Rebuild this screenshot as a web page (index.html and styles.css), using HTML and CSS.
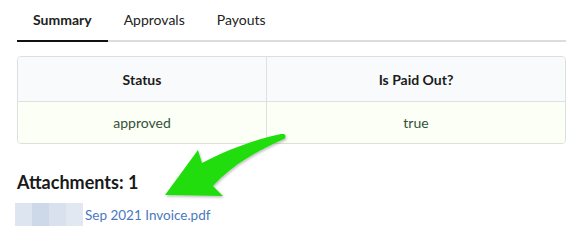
FILE: index.html
```html
<!DOCTYPE html>
<html lang="en">
<head>
<meta charset="utf-8">
<title>Summary</title>
<link rel="stylesheet" href="styles.css">
</head>
<body>
<div class="page">
  <div class="tabs">
    <span class="tab on">Summary</span>
    <span class="tab">Approvals</span>
    <span class="tab">Payouts</span>
  </div>

  <table class="info">
    <thead>
      <tr><th class="c1">Status</th><th>Is Paid Out?</th></tr>
    </thead>
    <tbody>
      <tr><td>approved</td><td>true</td></tr>
    </tbody>
  </table>

  <h3 class="att">Attachments: 1</h3>
  <div class="file">
    <span class="blur"><i></i><i></i><i></i><i></i></span>
    <a href="#">Sep 2021 Invoice.pdf</a>
  </div>

  <!-- annotation arrow drawn over the page -->
  <svg class="arrow" viewBox="0 0 140 75" width="140" height="75">
    <defs>
      <filter id="sh" x="-10%" y="-10%" width="130%" height="130%">
        <feDropShadow dx="1" dy="1.5" stdDeviation="1" flood-color="#000" flood-opacity=".25"/>
      </filter>
    </defs>
    <path filter="url(#sh)" fill="#22dd11"
      d="M129 9 C131 10 131 13 129 14 C104 25 78 39 58 61 L68 71 L10 70 L43 25 L47 38 C70 26 100 14 126 9 Z"/>
  </svg>
</div>
</body>
</html>
```

FILE: styles.css
```css
*{box-sizing:border-box;}
html,body{margin:0;background:#fff;}
body{ font-family:Lato,'Open Sans','Liberation Sans',sans-serif; color:#222; -webkit-font-smoothing:antialiased; }
.page{ position:relative; padding:0 20px 0 17px; }

/* tabs */
.tabs{ display:flex; border-bottom:2px solid #dcdcdc; height:42px; align-items:stretch; }
.tab{ display:flex; align-items:center; padding:0 16px 2px; font-size:14px; color:#222; margin-bottom:-2px; border-bottom:2px solid transparent; }
.tab.on{ font-weight:700; border-bottom-color:#111; }

/* table */
.info{ width:549px; margin-top:14px; border-collapse:separate; border-spacing:0; border:1px solid #dedede; border-radius:4px; overflow:hidden; font-size:14px; }
.info th,.info td{ text-align:center; }
.info th{ height:45px; background:#f9fafb; font-weight:700; color:#1c1c1c; border-bottom:1px solid #e0e0e0; }
.info td{ height:41px; background:#fcfff5; color:#34513a; }
.info .c1{ width:249px; }
.info th:first-child,.info td:first-child{ border-right:1px solid #e0e0e0; }

.att{ margin:26px 0 0; font-size:18px; font-weight:700; color:#1a1a1a; line-height:24px; }

.file{ display:flex; align-items:center; margin-top:9px; margin-left:-2px; }
.blur{ display:flex; width:68px; height:23px; background:#dde5f0; }
.blur i{ flex:1; }
.blur i:nth-child(2){ background:#cdd8e8; }
.blur i:nth-child(3){ background:#d8e1ed; }
.blur i:nth-child(4){ background:#e2e8f2; }
.file a{ font-size:13.5px; color:#4a78bf; text-decoration:none; margin-left:2px; }

.arrow{ position:absolute; left:155px; top:125px; }
```
